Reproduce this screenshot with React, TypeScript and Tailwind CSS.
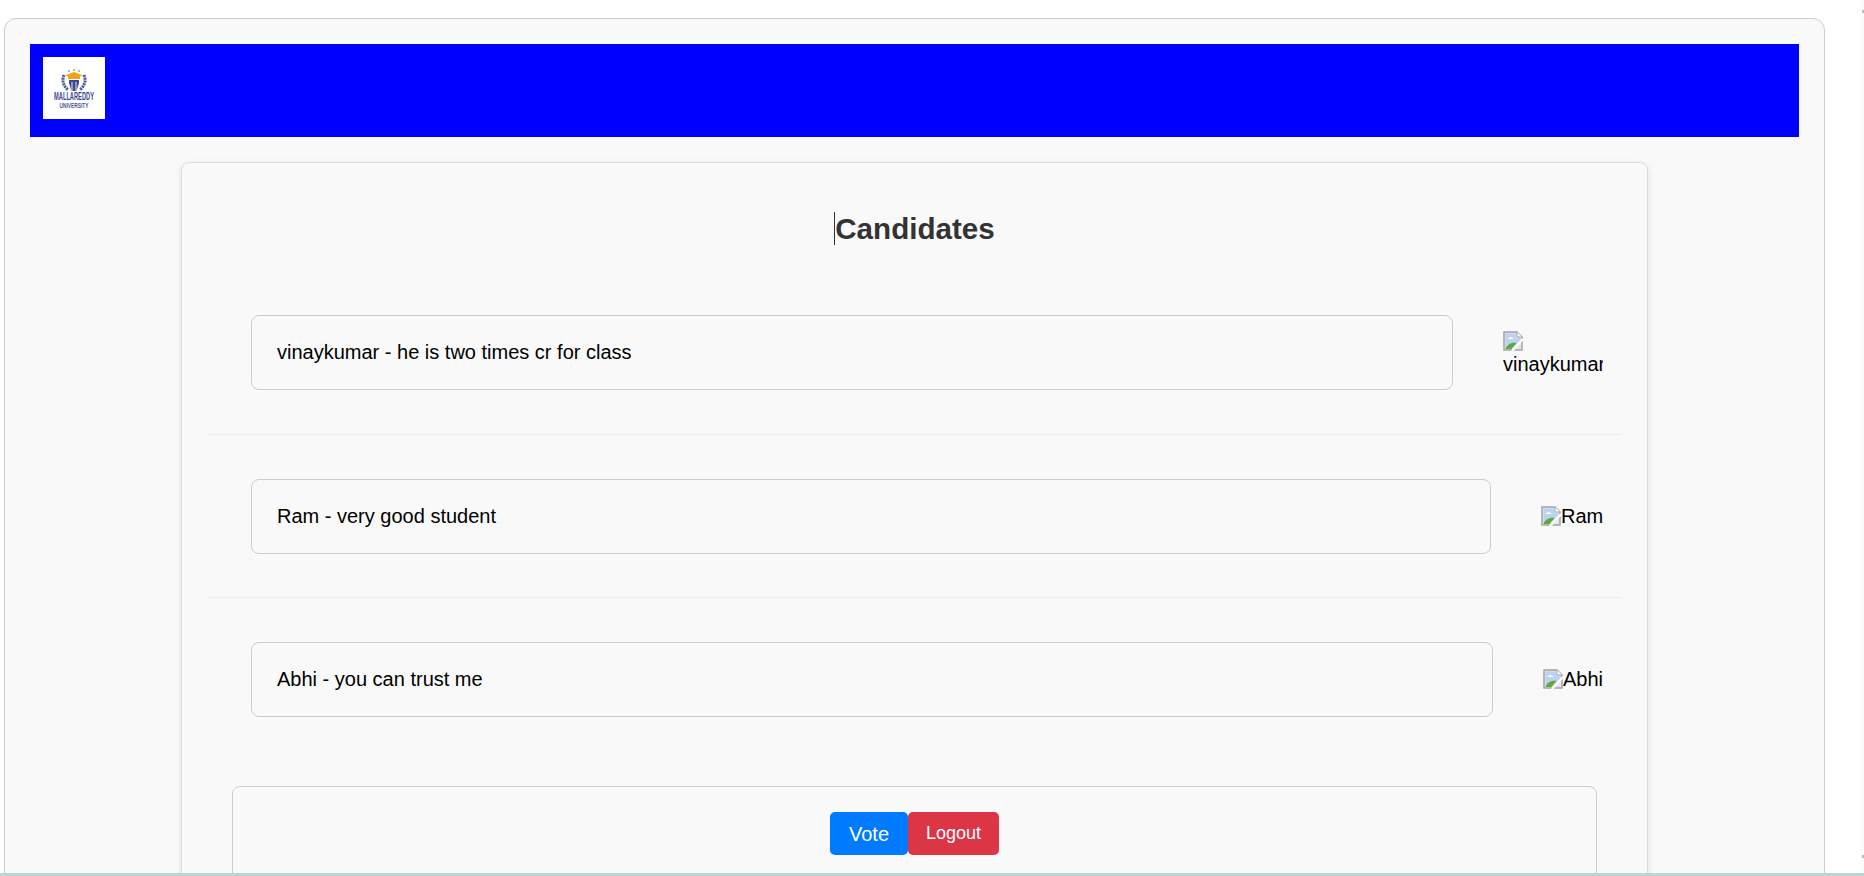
function BrokenImage() {
  return (
    <svg viewBox="0 0 20 20" className="inline-block h-[20px] w-[20px] align-[-3px]">
      <path d="M1 1h13l5 5v13H1z" fill="#dfe6f2" stroke="#a3a3a3" strokeWidth="1.5" />
      <path d="M14 1v5h5" fill="#ffffff" stroke="#a3a3a3" strokeWidth="1" />
      <path d="M2.5 2.5h10.5v4.5h4.5v5L2.5 17z" fill="#bcd2f2" />
      <path d="M4.5 8c1-2.5 5-2.5 6 0z" fill="#ffffff" />
      <path d="M2.5 18c1-4 6-7 11-6l-5 6z" fill="#5fa83c" />
      <path d="M20 8L9 20" stroke="#ffffff" strokeWidth="2.5" />
    </svg>
  );
}

function Logo() {
  return (
    <div className="flex h-[62px] w-[62px] shrink-0 items-center justify-center bg-white">
      <svg viewBox="0 0 62 62" className="h-[62px] w-[62px]">
        <path d="M21 18a12 12 0 0 0 4.5 15" fill="none" stroke="#4a5596" strokeWidth="3" strokeDasharray="2 0.8" />
        <path d="M41 18a12 12 0 0 1-4.5 15" fill="none" stroke="#4a5596" strokeWidth="3" strokeDasharray="2 0.8" />
        <path d="M22 18.5l9-3.5 9 3.5-9 2.5z" fill="#f7a11a" />
        <path d="M25 19h12v3H25z" fill="#f7a11a" />
        <circle cx="31" cy="13" r="1" fill="#f7a11a" />
        <circle cx="26" cy="14" r="0.8" fill="#4a5596" />
        <circle cx="36" cy="14" r="0.8" fill="#4a5596" />
        <path d="M26 23h10v3l-2.5 8h-5L26 26z" fill="#3c4790" />
        <path d="M29 25v9M33 25v9" stroke="#ffffff" strokeWidth="0.9" />
        <text x="31" y="43" textAnchor="middle" textLength="40" lengthAdjust="spacingAndGlyphs" fontFamily="Liberation Sans, sans-serif" fontSize="10" fontWeight="700" fill="#3c4790">MALLAREDDY</text>
        <text x="31" y="50.5" textAnchor="middle" textLength="29" lengthAdjust="spacingAndGlyphs" fontFamily="Liberation Sans, sans-serif" fontSize="8" fontWeight="700" fill="#4a5596">UNIVERSITY</text>
      </svg>
    </div>
  );
}

const rows = [
  { text: "vinaykumar - he is two times cr for class", alt: "vinaykumar", imgW: "w-[100px]", pad: "pt-[44px] pb-[44px] border-b" },
  { text: "Ram - very good student", alt: "Ram", imgW: "w-[62px] whitespace-nowrap", pad: "pt-[44px] pb-[43px] border-b" },
  { text: "Abhi - you can trust me", alt: "Abhi", imgW: "w-[60px] whitespace-nowrap", pad: "pt-[44px]" },
];

function Row({ text, alt, imgW, pad }: { text: string; alt: string; imgW: string; pad: string }) {
  return (
    <div className={"flex items-center justify-between border-[#eeeeee] pl-[43px] pr-[18px] " + pad}>
      <div className="flex h-[75px] flex-1 items-center rounded-[8px] border border-[#cccccc] bg-[#f9f9f9] px-[25px] pb-[2px] text-[20px] text-black">
        {text}
      </div>
      <div className={"ml-[50px] shrink-0 overflow-hidden text-[20px] leading-[23px] text-black " + imgW}>
        <BrokenImage />
        {alt}
      </div>
    </div>
  );
}

export default function App() {
  return (
    <div className="flex h-[876px] w-[1864px] flex-col overflow-hidden bg-white font-['Liberation_Sans',Arial,sans-serif]">
      <div className="flex min-h-0 flex-1 justify-between pl-[4px] pt-[18px]">
        <div className="h-[900px] w-[1821px] rounded-t-[12px] border border-[#cccccc] bg-[#f9f9f9] px-[25px] pt-[25px]">
          <header className="flex h-[93px] w-[1769px] items-start bg-[#0000ff] p-[13px]">
            <Logo />
          </header>
          <main className="mx-auto mt-[25px] h-[800px] w-[1467px] rounded-[8px] border border-[#dddddd] bg-[#f9f9f9] px-[26px] pt-[44px] shadow-[0_2px_6px_rgba(0,0,0,0.1)]">
            <h1 className="text-center text-[29.6px] font-bold leading-[44px] text-[#333333]">
              <span className="inline-block h-[33px] w-px bg-[#333333] align-[-6px]" />
              Candidates
            </h1>
            <div className="mt-[20px]">
              {rows.map((r) => (
                <Row key={r.alt} text={r.text} alt={r.alt} imgW={r.imgW} pad={r.pad} />
              ))}
            </div>
            <div className="mx-[24px] mt-[69px] flex h-[200px] justify-center rounded-[8px] border border-[#cccccc] bg-[#f9f9f9] pt-[25px]">
              <button className="h-[43px] w-[78px] rounded-[5px] bg-[#007bff] text-[20px] text-white">Vote</button>
              <button className="h-[43px] w-[91px] rounded-[5px] bg-[#dc3545] text-[18px] text-white">Logout</button>
            </div>
          </main>
        </div>
        <div className="-mt-[18px] flex w-[4px] flex-col items-end justify-between bg-[#fbfbfb] pb-[15px] pt-[10px]">
          <span className="h-[3px] w-[2px] bg-[#bbbbbb]" />
          <span className="h-[3px] w-[2px] bg-[#bbbbbb]" />
        </div>
      </div>
      <div className="h-[3px] shrink-0 bg-[#b9d6d6]" />
    </div>
  );
}
